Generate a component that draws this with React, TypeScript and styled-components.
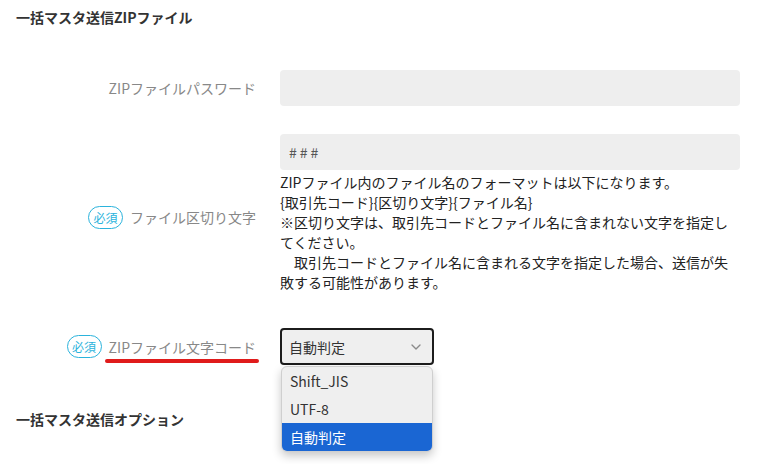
import styled, { createGlobalStyle } from "styled-components";
import { ChevronDown } from "lucide-react";

const GlobalStyle = createGlobalStyle`
  body {
    margin: 0;
    font-family: "Noto Sans CJK JP", "Noto Sans", sans-serif;
    color: #333;
    background: #fff;
  }
`;

const encodings = ["Shift_JIS", "UTF-8", "自動判定"];

export default function App() {
  return (
    <>
      <GlobalStyle />
      <Page>
        <SectionTitle>一括マスタ送信ZIPファイル</SectionTitle>
        <Form>
          <Row>
            <Label>
              <LabelText>ZIPファイルパスワード</LabelText>
            </Label>
            <Field>
              <TextBox />
            </Field>
          </Row>
          <Row>
            <Label>
              <Required>必須</Required>
              <LabelText>ファイル区切り文字</LabelText>
            </Label>
            <Field>
              <TextBox>###</TextBox>
              <Help>
                ZIPファイル内のファイル名のフォーマットは以下になります。
                <br />
                {"{取引先コード}{区切り文字}{ファイル名}"}
                <br />
                ※区切り文字は、取引先コードとファイル名に含まれない文字を指定してください。
                <br />
                {"\u3000取引先コードとファイル名に含まれる文字を指定した場合、送信が失敗する可能性があります。"}
              </Help>
            </Field>
          </Row>
          <Row>
            <Label>
              <Required>必須</Required>
              <LabelText $marked>ZIPファイル文字コード</LabelText>
            </Label>
            <Field>
              <SelectWrap>
                <Select>
                  <span>自動判定</span>
                  <ChevronDown size={16} color="#8a8a8a" strokeWidth={2} />
                </Select>
                <Menu>
                  {encodings.map((e) => (
                    <Option key={e} $selected={e === "自動判定"}>
                      {e}
                    </Option>
                  ))}
                </Menu>
              </SelectWrap>
            </Field>
          </Row>
        </Form>
        <SectionTitle $spaced>一括マスタ送信オプション</SectionTitle>
      </Page>
    </>
  );
}

const Page = styled.div`
  padding: 7px 17px 40px 16px;
`;

const SectionTitle = styled.h2<{ $spaced?: boolean }>`
  margin: ${(p) => (p.$spaced ? "44px" : "0")} 0 0;
  font-size: 14px;
  font-weight: bold;
  line-height: 20px;
  color: #333;
`;

const Form = styled.div`
  margin-top: 43px;
  display: flex;
  flex-direction: column;
  gap: 28px;
`;

const Row = styled.div`
  display: grid;
  grid-template-columns: 240px 460px;
  column-gap: 24px;
  align-items: center;
`;

const Label = styled.div`
  display: flex;
  justify-content: flex-end;
  align-items: center;
  gap: 7px;
`;

const LabelText = styled.span<{ $marked?: boolean }>`
  position: relative;
  font-size: 14px;
  line-height: 20px;
  color: #888;
  &::after {
    content: "";
    display: ${(p) => (p.$marked ? "block" : "none")};
    position: absolute;
    left: -4px;
    right: -3px;
    bottom: -6px;
    height: 4px;
    border-radius: 2px;
    background: #e01b1b;
  }
`;

const Required = styled.span`
  display: inline-flex;
  align-items: center;
  justify-content: center;
  width: 35px;
  height: 23px;
  border: 1.5px solid #2bb3dc;
  border-radius: 12px;
  font-size: 12px;
  color: #2bb3dc;
  box-sizing: border-box;
`;

const Field = styled.div`
  display: flex;
  flex-direction: column;
`;

const TextBox = styled.div`
  height: 36px;
  box-sizing: border-box;
  padding: 0 9px;
  display: flex;
  align-items: center;
  background: #eeeeee;
  border-radius: 4px;
  font-size: 14px;
  letter-spacing: 3px;
  color: #555;
`;

const Help = styled.p`
  margin: 2px 0 8px;
  font-size: 14px;
  line-height: 20px;
  color: #222;
`;

const SelectWrap = styled.div`
  position: relative;
  width: 154px;
`;

const Select = styled.div`
  height: 37px;
  box-sizing: border-box;
  display: flex;
  align-items: center;
  justify-content: space-between;
  padding: 0 8px 0 7px;
  border: 2px solid #1c1c1c;
  border-radius: 4px;
  background: #efefef;
  font-size: 14px;
  color: #333;
`;

const Menu = styled.div`
  position: absolute;
  top: 38px;
  left: 1px;
  width: 152px;
  box-sizing: border-box;
  padding: 0;
  background: #efefef;
  border: 1px solid #cfcfcf;
  border-radius: 6px;
  overflow: hidden;
  box-shadow: 0 4px 10px rgba(0, 0, 0, 0.22);
`;

const Option = styled.div<{ $selected?: boolean }>`
  height: 28px;
  display: flex;
  align-items: center;
  padding: 0 8px;
  font-size: 14px;
  color: ${(p) => (p.$selected ? "#fff" : "#333")};
  background: ${(p) => (p.$selected ? "#1a66d3" : "transparent")};
`;
